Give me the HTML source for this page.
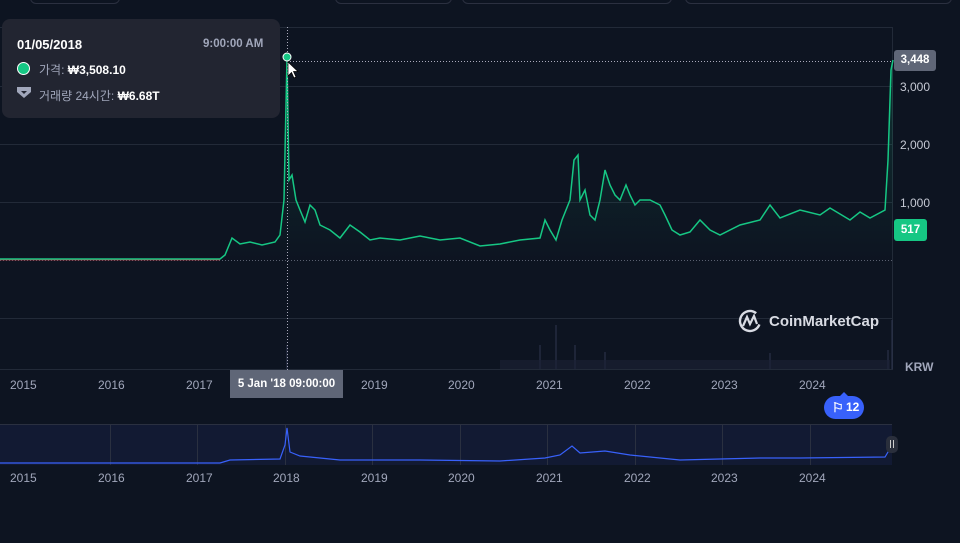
<!DOCTYPE html>
<html><head><meta charset="utf-8"><style>
body{margin:0;width:960px;height:543px;background:#0d1421;overflow:hidden;font-family:"Liberation Sans","Noto Sans CJK KR",sans-serif;position:relative}
.t{position:absolute;color:#a1a7bb;font-size:12px}
</style></head><body>
<div style="position:absolute;left:30px;top:-8px;width:88px;height:10px;border:1px solid #2b3040;border-radius:6px"></div>
<div style="position:absolute;left:335px;top:-8px;width:115px;height:10px;border:1px solid #2b3040;border-radius:6px"></div>
<div style="position:absolute;left:462px;top:-8px;width:208px;height:10px;border:1px solid #2b3040;border-radius:6px"></div>
<div style="position:absolute;left:685px;top:-8px;width:265px;height:10px;border:1px solid #2b3040;border-radius:6px"></div>
<svg width="960" height="543" style="position:absolute;left:0;top:0">
<defs><linearGradient id="g" x1="0" y1="0" x2="0" y2="1"><stop offset="0" stop-color="#16c784" stop-opacity=".18"/><stop offset="1" stop-color="#16c784" stop-opacity="0"/></linearGradient></defs>
<g stroke="#222a38" stroke-width="1">
<line x1="0" y1="27.5" x2="892" y2="27.5"/><line x1="0" y1="86.5" x2="892" y2="86.5"/><line x1="0" y1="144.5" x2="892" y2="144.5"/><line x1="0" y1="202.5" x2="892" y2="202.5"/><line x1="0" y1="318.5" x2="892" y2="318.5"/><line x1="0" y1="369.5" x2="892" y2="369.5"/>
<line x1="892.5" y1="27" x2="892.5" y2="370"/>
</g>
<line x1="0" y1="260.5" x2="892" y2="260.5" stroke="#5a6070" stroke-dasharray="1 2"/>
<polygon fill="url(#g)" points="0,259 220,259 225,255 232,238 240,244 250,242 262,245 275,242 280,235 284,200 287,58 289,180 292,175 296,200 300,210 305,222 310,205 315,210 320,225 330,230 340,238 350,225 360,232 370,240 380,238 400,240 420,236 440,240 460,238 480,246 500,244 520,240 540,238 545,220 550,230 556,240 562,220 570,200 574,160 578,155 580,200 585,190 590,215 595,220 600,200 605,170 610,185 615,195 620,200 626,185 630,195 635,205 640,200 650,200 660,205 665,215 672,230 680,235 690,232 700,220 710,230 720,235 740,225 760,220 770,205 780,218 800,210 820,215 830,208 850,220 860,212 870,218 885,210 888,160 891,70 893,60 893,260 0,260"/>
<polyline fill="none" stroke="#ea3943" stroke-width="1.5" points="0,259.5 220,259.5"/>
<polyline fill="none" stroke="#16c784" stroke-width="1.5" points="0,259 220,259 225,255 232,238 240,244 250,242 262,245 275,242 280,235 284,200 287,58 289,180 292,175 296,200 300,210 305,222 310,205 315,210 320,225 330,230 340,238 350,225 360,232 370,240 380,238 400,240 420,236 440,240 460,238 480,246 500,244 520,240 540,238 545,220 550,230 556,240 562,220 570,200 574,160 578,155 580,200 585,190 590,215 595,220 600,200 605,170 610,185 615,195 620,200 626,185 630,195 635,205 640,200 650,200 660,205 665,215 672,230 680,235 690,232 700,220 710,230 720,235 740,225 760,220 770,205 780,218 800,210 820,215 830,208 850,220 860,212 870,218 885,210 888,160 891,70 893,60"/>
<g stroke="#2e3650" stroke-width="1">
<line x1="287" y1="369" x2="287" y2="345"/><line x1="540" y1="369" x2="540" y2="345"/><line x1="556" y1="369" x2="556" y2="325"/><line x1="575" y1="369" x2="575" y2="345"/><line x1="605" y1="369" x2="605" y2="352"/><line x1="770" y1="369" x2="770" y2="353"/><line x1="888" y1="369" x2="888" y2="350"/><line x1="892" y1="369" x2="892" y2="320"/>
</g>
<rect x="500" y="360" width="390" height="9" fill="#1c2236" opacity=".6"/>
<line x1="287.5" y1="27" x2="287.5" y2="370" stroke="#aab" stroke-dasharray="1 2"/>
<line x1="287" y1="61.5" x2="892" y2="61.5" stroke="#aab" stroke-dasharray="1 2"/>
<circle cx="287" cy="57" r="4" fill="#16c784" stroke="#fff" stroke-width="1"/>
<path d="M288 62 L288 76 L291.5 72.5 L294 78 L296 77 L293.5 71.5 L298 71.5 Z" fill="#fff" stroke="#000" stroke-width=".7"/>
<!-- mini chart -->
<rect x="0" y="425" width="892" height="40" fill="#121a33"/>
<g stroke="#2a3040"><line x1="110.5" y1="425" x2="110.5" y2="465"/><line x1="197.5" y1="425" x2="197.5" y2="465"/><line x1="285.5" y1="425" x2="285.5" y2="465"/><line x1="372.5" y1="425" x2="372.5" y2="465"/><line x1="460.5" y1="425" x2="460.5" y2="465"/><line x1="547.5" y1="425" x2="547.5" y2="465"/><line x1="635.5" y1="425" x2="635.5" y2="465"/><line x1="722.5" y1="425" x2="722.5" y2="465"/><line x1="810.5" y1="425" x2="810.5" y2="465"/><line x1="0" y1="424.5" x2="892" y2="424.5"/></g>
<polyline fill="none" stroke="#3861fb" stroke-width="1.2" points="0,463 220,463 230,460 280,459 285,445 287,428 290,452 300,456 340,460 420,460 500,461 545,458 560,455 572,446 580,453 605,451 630,455 680,460 760,458 800,458 885,457 888,452 891,440"/>
<rect x="886" y="436" width="12" height="17" rx="5" fill="#2a2f3c"/>
<line x1="890.5" y1="440" x2="890.5" y2="448" stroke="#ccc"/><line x1="893.5" y1="440" x2="893.5" y2="448" stroke="#ccc"/>
<!-- CMC logo -->
<circle cx="750" cy="321" r="10" fill="none" stroke="#d8dbe3" stroke-width="2.4" stroke-dasharray="50 14" transform="rotate(20 750 321)"/>
<path d="M743 326 L747 317 L750 324 L754 316 L757 324" fill="none" stroke="#d8dbe3" stroke-width="2.2"/>
</svg>
<div style="position:absolute;left:769px;top:313px;color:#d8dbe3;font-size:15px;font-weight:bold">CoinMarketCap</div>
<!-- tooltip -->
<div style="position:absolute;left:2px;top:19px;width:278px;height:99px;background:#222531;border-radius:8px"></div>
<div style="position:absolute;left:17px;top:37px;color:#fff;font-size:13px;font-weight:bold">01/05/2018</div>
<div style="position:absolute;left:203px;top:38px;color:#a1a7bb;font-size:11.5px;font-weight:bold">9:00:00 AM</div>
<div style="position:absolute;left:17px;top:62px;width:11px;height:11px;border-radius:50%;background:#16c784;border:1.5px solid #fff"></div>
<div style="position:absolute;left:39px;top:61px;color:#a1a7bb;font-size:12px">가격: <b style="color:#fff">₩3,508.10</b></div>
<svg width="16" height="14" style="position:absolute;left:16px;top:85px"><path d="M1 2 L15 2 L15 7 L8 13 L1 7 Z" fill="#a1a7bb"/><path d="M5 6 L11 6 L8 9 Z" fill="#222531"/></svg>
<div style="position:absolute;left:39px;top:87px;color:#a1a7bb;font-size:12px">거래량 24시간: <b style="color:#fff">₩6.68T</b></div>
<!-- right labels -->
<div style="position:absolute;left:894px;top:50px;width:42px;height:21px;background:#5f6677;border-radius:3px;color:#fff;font-size:11.5px;font-weight:bold;line-height:21px;text-align:center">3,448</div>
<div class="t" style="left:900px;top:80px;color:#c5c9d4">3,000</div>
<div class="t" style="left:900px;top:138px;color:#c5c9d4">2,000</div>
<div class="t" style="left:900px;top:196px;color:#c5c9d4">1,000</div>
<div style="position:absolute;left:894px;top:219px;width:33px;height:22px;background:#16c784;border-radius:3px;color:#fff;font-size:11.5px;font-weight:bold;line-height:22px;text-align:center">517</div>
<div style="position:absolute;left:905px;top:360px;color:#a1a7bb;font-size:12px;font-weight:bold">KRW</div>
<!-- x labels -->
<div class="t" style="left:10px;top:378px">2015</div><div class="t" style="left:98px;top:378px">2016</div><div class="t" style="left:186px;top:378px">2017</div>
<div class="t" style="left:361px;top:378px">2019</div><div class="t" style="left:448px;top:378px">2020</div><div class="t" style="left:536px;top:378px">2021</div><div class="t" style="left:624px;top:378px">2022</div><div class="t" style="left:711px;top:378px">2023</div><div class="t" style="left:799px;top:378px">2024</div>
<div style="position:absolute;left:230px;top:370px;width:113px;height:28px;background:#5f6677;color:#fff;font-size:11.5px;font-weight:bold;line-height:28px;text-align:center">5 Jan '18 09:00:00</div>
<div style="position:absolute;left:824px;top:396px;width:40px;height:23px;background:#3861fb;border-radius:12px;color:#fff;font-size:12px;font-weight:bold;line-height:23px;text-align:right;padding-right:0"><span style="position:absolute;left:8px;font-size:13px">⚐</span><span style="position:absolute;left:22px">12</span></div>
<div style="position:absolute;left:840px;top:392px;width:0;height:0;border:4px solid transparent;border-bottom-color:#3861fb;border-top:0"></div>
<div class="t" style="left:10px;top:471px">2015</div><div class="t" style="left:98px;top:471px">2016</div><div class="t" style="left:186px;top:471px">2017</div><div class="t" style="left:273px;top:471px">2018</div>
<div class="t" style="left:361px;top:471px">2019</div><div class="t" style="left:448px;top:471px">2020</div><div class="t" style="left:536px;top:471px">2021</div><div class="t" style="left:624px;top:471px">2022</div><div class="t" style="left:711px;top:471px">2023</div><div class="t" style="left:799px;top:471px">2024</div>
</body></html>
